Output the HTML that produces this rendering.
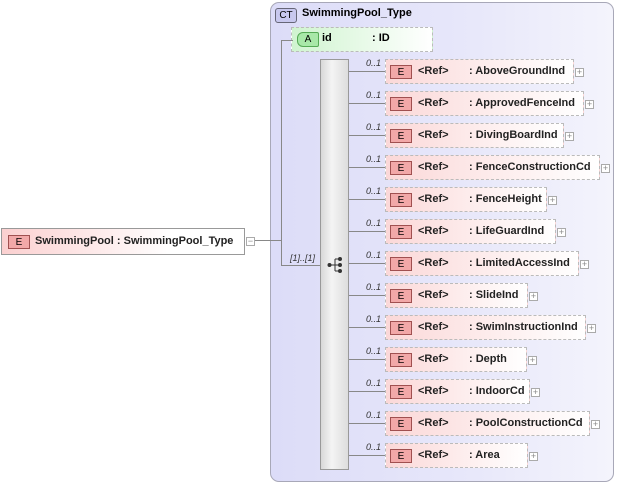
<!DOCTYPE html><html><head><style>
body{margin:0;width:618px;height:484px;background:#fff;position:relative;font-family:"Liberation Sans",sans-serif;font-size:11px;overflow:hidden}
.a{position:absolute}
.ct{left:270px;top:2px;width:342px;height:478px;border:1px solid #a8a8b8;border-radius:9px;background:linear-gradient(90deg,#dcdcf8,#e8e8fa 60%,#f4f4fc)}
.el{position:absolute;height:25px;border:1px dashed #bbb;background:linear-gradient(90deg,#fbd8d8,#fff);box-sizing:border-box}
.E{position:absolute;left:4px;top:5px;width:22px;height:14px;border:1px solid #a05050;background:#f2a8a8;font-size:10px;text-align:center;line-height:14px;box-sizing:border-box}
.t{position:absolute;top:5px;font-weight:bold;color:#222}
.pl{position:absolute;width:9px;height:9px;border:1px solid #aaa;background:#fff;box-sizing:border-box;font-size:9px;line-height:7px;text-align:center;color:#888}
.o{position:absolute;font-size:9px;font-style:italic;color:#333}
.h{position:absolute;height:1px;background:#888}
</style></head><body>
<div class="a ct"></div>
<div class="a" style="left:275px;top:8px;width:20px;height:13px;border:1px solid #667;border-radius:3px;background:#c8c8ee;font-size:10px;text-align:center;line-height:13px">CT</div>
<div class="a" style="left:302px;top:7px;font-weight:bold">SwimmingPool_Type</div>
<div class="a" style="left:291px;top:27px;width:142px;height:25px;border:1px dashed #bbb;background:linear-gradient(90deg,#d0f4d0,#fff);box-sizing:border-box"></div>
<div class="a" style="left:297px;top:32px;width:20px;height:13px;border:1px solid #5a5;border-radius:6px 2px 2px 6px;background:#a8e8a8;font-size:10px;text-align:center;line-height:13px">A</div>
<div class="a" style="left:322px;top:32px;font-weight:bold">id</div>
<div class="a" style="left:372px;top:32px;font-weight:bold">: ID</div>
<div class="a" style="left:281px;top:40px;width:1px;height:226px;background:#888"></div>
<div class="h" style="left:281px;top:40px;width:12px"></div>
<div class="h" style="left:281px;top:265px;width:39px"></div>
<div class="h" style="left:252px;top:240px;width:29px"></div>
<div class="o" style="left:290px;top:253px">[1]..[1]</div>
<div class="a" style="left:320px;top:59px;width:29px;height:411px;border:1px solid #999;box-sizing:border-box;background:linear-gradient(90deg,#d8d8d8,#f4f4f4 40%,#ddd)"></div>
<svg class="a" style="left:327px;top:257px" width="18" height="16"><line x1="2" y1="8" x2="8" y2="8" stroke="#333"/><line x1="8" y1="2" x2="8" y2="14" stroke="#333"/><line x1="8" y1="2" x2="13" y2="2" stroke="#333"/><line x1="8" y1="8" x2="13" y2="8" stroke="#333"/><line x1="8" y1="14" x2="13" y2="14" stroke="#333"/><circle cx="2.5" cy="8" r="2" fill="#333"/><circle cx="13" cy="2" r="2" fill="#333"/><circle cx="13" cy="8" r="2" fill="#333"/><circle cx="13" cy="14" r="2" fill="#333"/></svg>
<div class="el" style="left:1px;top:228px;width:244px;height:27px;border:1px solid #999;background:linear-gradient(90deg,#fbd0d0,#fff 70%)"><div class="E" style="left:6px;top:6px">E</div><div class="t" style="left:33px;top:6px">SwimmingPool : SwimmingPool_Type</div></div>
<div class="pl" style="left:246px;top:237px">−</div>
<div id="rows"></div>
<script>
var n=[["AboveGroundInd",574],["ApprovedFenceInd",584],["DivingBoardInd",564],["FenceConstructionCd",600],["FenceHeight",547],["LifeGuardInd",556],["LimitedAccessInd",579],["SlideInd",528],["SwimInstructionInd",586],["Depth",527],["IndoorCd",530],["PoolConstructionCd",590],["Area",528]];
var h="";n.forEach(function(r,i){var y=59+32*i;
h+='<div class="h" style="left:349px;top:'+(y+12)+'px;width:36px"></div><div class="o" style="left:366px;top:'+(y-1)+'px">0..1</div>';
h+='<div class="el" style="left:385px;top:'+y+'px;width:'+(r[1]-385)+'px"><div class="E">E</div><div class="t" style="left:32px">&lt;Ref&gt;</div><div class="t" style="left:83px">: '+r[0]+'</div></div>';
h+='<div class="pl" style="left:'+(r[1]+1)+'px;top:'+(y+9)+'px">+</div>';});
document.getElementById("rows").innerHTML=h;
</script>
</body></html>
